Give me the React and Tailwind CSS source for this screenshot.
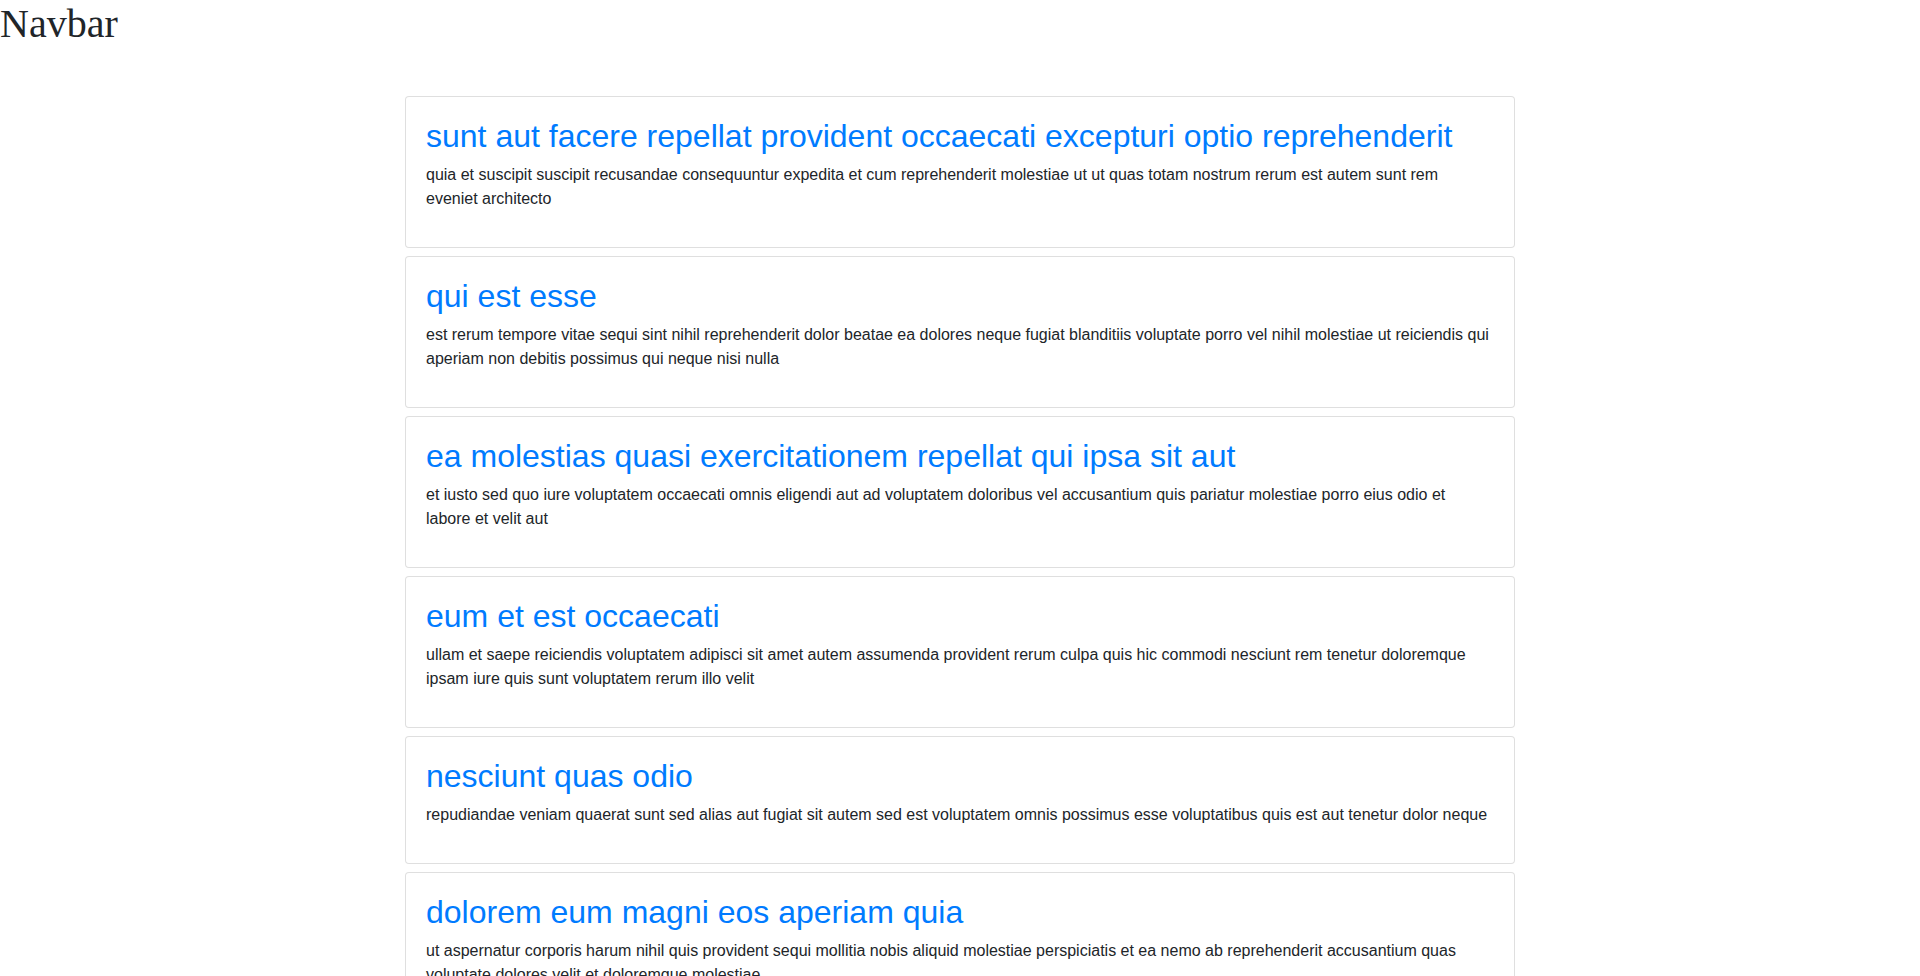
import React from 'react';

const posts = [
    {
        id: 1,
        title: 'sunt aut facere repellat provident occaecati excepturi optio reprehenderit',
        body: 'quia et suscipit suscipit recusandae consequuntur expedita et cum reprehenderit molestiae ut ut quas totam nostrum rerum est autem sunt rem eveniet architecto',
    },
    {
        id: 2,
        title: 'qui est esse',
        body: 'est rerum tempore vitae sequi sint nihil reprehenderit dolor beatae ea dolores neque fugiat blanditiis voluptate porro vel nihil molestiae ut reiciendis qui aperiam non debitis possimus qui neque nisi nulla',
    },
    {
        id: 3,
        title: 'ea molestias quasi exercitationem repellat qui ipsa sit aut',
        body: 'et iusto sed quo iure voluptatem occaecati omnis eligendi aut ad voluptatem doloribus vel accusantium quis pariatur molestiae porro eius odio et labore et velit aut',
    },
    {
        id: 4,
        title: 'eum et est occaecati',
        body: 'ullam et saepe reiciendis voluptatem adipisci sit amet autem assumenda provident rerum culpa quis hic commodi nesciunt rem tenetur doloremque ipsam iure quis sunt voluptatem rerum illo velit',
    },
    {
        id: 5,
        title: 'nesciunt quas odio',
        body: 'repudiandae veniam quaerat sunt sed alias aut fugiat sit autem sed est voluptatem omnis possimus esse voluptatibus quis est aut tenetur dolor neque',
    },
    {
        id: 6,
        title: 'dolorem eum magni eos aperiam quia',
        body: 'ut aspernatur corporis harum nihil quis provident sequi mollitia nobis aliquid molestiae perspiciatis et ea nemo ab reprehenderit accusantium quas voluptate dolores velit et doloremque molestiae',
    },
    {
        id: 7,
        title: 'magnam facilis autem',
        body: 'dolore placeat quibusdam ea quo vitae magni quis enim qui quis quo nemo aut saepe quidem repellat excepturi ut quia sunt ut sequi eos ea sed quas',
    },
    {
        id: 8,
        title: 'dolorem dolore est ipsam',
        body: 'dignissimos aperiam dolorem qui eum facilis quibusdam animi sint suscipit qui sint possimus cum quaerat magni maiores excepturi ipsam ut commodi dolor voluptatum modi aut vitae',
    },
];

const Navbar = () => (
    <h1 className="text-[40px] leading-[48px] mb-2 text-[#212529] font-['Liberation_Serif',serif]">Navbar</h1>
);

const PostCard = ({ post }) => (
    <div className="mb-2 bg-white border border-black/[0.125] rounded-[4px]">
        <div className="p-5">
            <h2 className="text-[32px] leading-[38px] mb-2 text-[#007bff]">{post.title}</h2>
            <p className="text-base leading-6 mb-4 text-[#212529]">{post.body}</p>
        </div>
    </div>
);

const App = () => {
    return (
        <div className="min-h-screen bg-white font-['Liberation_Sans',Arial,sans-serif]">
            <Navbar />
            <div className="max-w-[1140px] mx-auto px-[15px] mt-12">
                {posts.map(post => (
                    <PostCard key={post.id} post={post} />
                ))}
            </div>
        </div>
    );
};

export default App;
